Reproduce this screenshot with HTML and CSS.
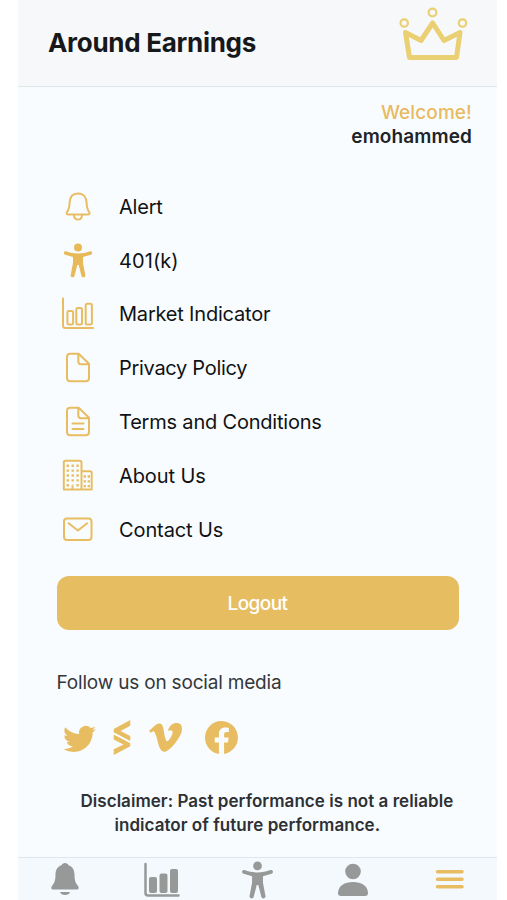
FILE: index.html
```html
<!DOCTYPE html>
<html lang="en">
<head>
<meta charset="utf-8">
<title>Around Earnings</title>
<link rel="stylesheet" href="styles.css">
</head>
<body>
<div class="screen">
  <header class="header">
    <h1 class="title">Around Earnings</h1>
    <svg class="crown" width="70" height="58" viewBox="0 0 70 58">
      <path d="M6.500 26.500 22 34.500 33.700 17 45 34.500 61 26.500 57.500 51.500H10.500z"/>
      <g class="jewels"><circle cx="5.200" cy="17" r="3.700"/><circle cx="33.500" cy="6.500" r="3.900"/><circle cx="63.500" cy="17" r="3.700"/></g>
    </svg>
  </header>
  <section class="welcome">
    <span class="hello">Welcome!</span>
    <span class="user">emohammed</span>
  </section>
  <nav class="menu">
    <a class="item"><svg class="icon" viewBox="0 0 36 36"><path d="M18 4.500c-5.500 0-8.200 4-8.400 9.300-.2 5.200-.8 7-2.500 9-.9 1.200-.7 2.700 1 2.700h20c1.700 0 1.900-1.500 1-2.700-1.700-2-2.300-3.800-2.500-9C26.400 8.500 23.500 4.500 18 4.500zM14 26.500c.4 5.400 7.600 5.400 8 0"/></svg><span>Alert</span></a>
    <a class="item"><svg class="icon solid" viewBox="0 0 36 36"><use href="#person"/></svg><span class="k401">401(k)</span></a>
    <a class="item"><svg class="icon" viewBox="0 0 36 36"><path d="M3 2.500v27q0 2.500 2.500 2.500H33"/><rect x="7.400" y="15" width="5.700" height="13.500" rx="1.500"/><rect x="16.300" y="12" width="5.700" height="16.500" rx="1.500"/><rect x="25.700" y="7.800" width="6.200" height="20.700" rx="1.500"/></svg><span>Market Indicator</span></a>
    <a class="item"><svg class="icon" viewBox="0 0 36 36"><use href="#doc"/></svg><span class="privacy">Privacy Policy</span></a>
    <a class="item"><svg class="icon" viewBox="0 0 36 36"><use href="#doc"/><path d="M12.500 19.500h11M12.500 25h11"/></svg><span>Terms and Conditions</span></a>
    <a class="item"><svg class="icon" viewBox="0 0 36 36"><path d="M3.800 31.500V4.500Q3.800 2.700 5.600 2.700H19.700Q21.500 2.700 21.500 4.500V31.500zM21.500 13.300h8.700q1.500 0 1.500 1.500v16.700H21.500M12.500 31.500v-3.200"/><path class="windows" d="M7.800 6.500v22M12.700 6.500v20M17.600 6.500v22"/><path class="windows" d="M24.800 17.300v12M28.800 17.300v12"/></svg><span class="short">About Us</span></a>
    <a class="item"><svg class="icon" viewBox="0 0 36 36"><rect x="4" y="6.500" width="27.500" height="21.500" rx="3"/><path d="m8.600 11.300 9.300 7.200 9.300-7.200"/></svg><span class="short">Contact Us</span></a>
  </nav>
  <button class="logout">Logout</button>
  <p class="follow">Follow us on social media</p>
  <div class="social">
    <svg class="twitter" viewBox="0 1 16 14" preserveAspectRatio="none"><path d="M5.026 15c6.038 0 9.341-5.003 9.341-9.334 0-.14 0-.282-.006-.422A6.685 6.685 0 0 0 16 3.542a6.658 6.658 0 0 1-1.889.518 3.301 3.301 0 0 0 1.447-1.817 6.533 6.533 0 0 1-2.087.793A3.286 3.286 0 0 0 7.875 6.030a9.325 9.325 0 0 1-6.767-3.429 3.289 3.289 0 0 0 1.018 4.382A3.323 3.323 0 0 1 .64 6.575v.045a3.288 3.288 0 0 0 2.632 3.218 3.203 3.203 0 0 1-.865.115 3.230 3.230 0 0 1-.614-.057 3.283 3.283 0 0 0 3.067 2.277A6.588 6.588 0 0 1 .78 13.580a6.320 6.320 0 0 1-.780-.045A9.344 9.344 0 0 0 5.026 15z"/></svg>
    <svg class="stock" viewBox="0 0 18 36"><path d="M17.500 0V6L7.500 11.200 17.500 16.500V21.500L.5 12.600V9.200zM.5 15 17.500 23.800V27L.5 36V30L10.500 25.200.5 20z"/></svg>
    <svg class="vimeo" viewBox="0 1 16 14" preserveAspectRatio="none"><path d="M15.992 4.204c-.071 1.556-1.158 3.687-3.262 6.393-2.175 2.829-4.016 4.243-5.522 4.243-.933 0-1.722-.861-2.367-2.583L3.550 7.523C3.070 5.800 2.556 4.940 2.007 4.940c-.118 0-.537.253-1.254.754L0 4.724c.8-.7 1.600-1.400 2.334-2.081 1.054-.910 1.845-1.388 2.373-1.437 1.243-.123 2.010.728 2.298 2.553.310 1.968.526 3.190.646 3.666.360 1.631.756 2.446 1.186 2.445.334 0 .836-.530 1.508-1.587.671-1.058 1.030-1.863 1.077-2.415.096-.913-.263-1.370-1.077-1.370-.4 0-.8.090-1.185.261.789-2.573 2.291-3.825 4.508-3.756 1.644.050 2.419 1.117 2.324 3.200z"/></svg>
    <svg class="facebook" viewBox="0 0 16 16"><path d="M16 8.049c0-4.446-3.582-8.050-8-8.050C3.580 0-.002 3.603-.002 8.050c0 4.017 2.926 7.347 6.750 7.951v-5.625h-2.030V8.050H6.750V6.275c0-2.017 1.195-3.131 3.022-3.131.876 0 1.791.157 1.791.157v1.980h-1.009c-.993 0-1.303.621-1.303 1.258v1.510h2.218l-.354 2.326H9.250V16c3.824-.604 6.750-3.934 6.750-7.951z"/></svg>
  </div>
  <p class="disclaimer"><span>Disclaimer: Past performance is not a reliable</span><span class="line2">indicator of future performance.</span></p>
  <footer class="tabs">
    <svg class="tab" viewBox="0 0 40 40"><path d="M19 4c-1.900 0-3 1-3.400 2.200-4 1.400-6 4.500-6.100 9.300-.1 6-.9 8-3 10.700C4.600 28.600 5 30.500 7.500 30.500h23c2.500 0 2.900-1.900 1-4.300-2.100-2.700-2.900-4.700-3-10.700-.1-4.800-2.100-7.900-6.100-9.300C22 5 20.900 4 19 4zM14 33h10c-.7 4-9.300 4-10 0z"/></svg>
    <svg class="tab" viewBox="0 0 40 40"><path class="axis" d="M3.500 5v29q0 2.500 2.500 2.500h30.500"/><rect x="7" y="18" width="8" height="16" rx="2"/><rect x="17.500" y="14.500" width="8" height="19.500" rx="2"/><rect x="28" y="10" width="8" height="24" rx="2"/></svg>
    <svg class="tab" viewBox="0 0 40 40"><use href="#person" transform="translate(.9 2) scale(1.090)"/></svg>
    <svg class="tab" viewBox="0 0 40 40"><circle cx="20" cy="12.500" r="7.800"/><path d="M5 33.500C5.500 27 11.500 23 20 23s14.500 4 15 10.500q.2 3.500-3 3.500H8q-3.200 0-3-3.500z"/></svg>
    <svg class="tab burger" viewBox="0 0 40 40"><path d="M8.500 12.700h24.500M8.500 20.200h24.500M8.500 27.700h24.500"/></svg>
  </footer>
</div>
<svg class="defs" width="0" height="0">
  <defs>
    <g id="person"><circle cx="18" cy="4.500" r="4"/><path d="M6 8.300C14 11.200 22 11.200 30 8.300c2.400-.6 3 2.800.8 3.500L23 14v6l2.300 12c.4 2.700-3.200 3.200-3.800.9L18.700 22h-1.400l-2.800 10.900c-.6 2.300-4.200 1.800-3.800-.9L13 20v-6l-7.800-2.200C3 11.100 3.600 7.700 6 8.300z"/></g>
    <g id="doc"><path d="M10 3.700h8.700L29 13.800v14.200q0 3.200-3.200 3.200H10.200Q7 31.200 7 28V6.900q0-3.200 3.200-3.200M18.300 4v7.600q0 2.600 2.600 2.600H29"/></g>
  </defs>
</svg>
</body>
</html>
```
FILE: styles.css
```css
* { box-sizing: border-box; }
body { margin: 0; background: #fff; font-family: Inter, "Liberation Sans", sans-serif; }
h1, p { margin: 0; }
.screen { width: 479px; height: 900px; margin-left: 18px; display: flex; flex-direction: column; background: #f8fcff; overflow: hidden; }
.header { height: 87px; flex: none; display: flex; justify-content: space-between; align-items: flex-start; padding: 0 28px 0 30px; background: #f6f8fa; border-bottom: 1px solid #dfe7eb; }
.title { margin-top: 26px; font-size: 26px; line-height: 33px; font-weight: 700; color: #17181a; white-space: nowrap; letter-spacing: -.29px; }
.crown { margin-top: 6px; fill: none; stroke: #ebcf73; stroke-width: 5; stroke-linejoin: round; }
.jewels { stroke-width: 2.200; }
.welcome { height: 93px; flex: none; padding: 14px 25px 0 0; display: flex; flex-direction: column; align-items: flex-end; font-size: 19px; line-height: 24px; font-weight: 600; color: #202327; letter-spacing: .1px; }
.hello { color: #e9ba60; font-weight: 500; letter-spacing: .1px; }
.menu { flex: none; display: flex; flex-direction: column; padding-left: 42px; }
.item { height: 53.800px; display: flex; align-items: center; gap: 23px; font-size: 20px; color: #101214; white-space: nowrap; letter-spacing: -.2px; }
.k401 { letter-spacing: .08px; }
.privacy { letter-spacing: -.3px; }
.short { letter-spacing: -.1px; }
.icon { width: 36px; height: 36px; flex: none; fill: none; stroke: #e8bd62; stroke-width: 2; stroke-linecap: round; stroke-linejoin: round; }
.icon.solid { fill: #e8b957; stroke: none; }
.icon .windows { stroke-width: 2.400; stroke-dasharray: 2.400 2.500; stroke-linecap: butt; }
.logout { flex: none; width: 402px; height: 54px; margin: 19px 0 0 38.500px; padding: 2px 0 0; border: 0; border-radius: 12px; background: #e7bd62; color: #fff; font: 500 19px/52px Inter, "Liberation Sans", sans-serif; letter-spacing: -.55px; }
.follow { margin: 41px 0 0 38.500px; font-size: 19px; line-height: 24px; color: #34373a; white-space: nowrap; letter-spacing: -.19px; }
.social { height: 36px; flex: none; margin: 25px 0 0 44.500px; display: flex; align-items: center; fill: #e8bd62; }
.twitter { width: 33px; height: 28px; }
.stock { width: 18px; height: 35px; margin-left: 17px; }
.vimeo { width: 33px; height: 29px; margin-left: 18px; }
.facebook { width: 33px; height: 33px; margin-left: 23px; }
.disclaimer { margin: 33px 0 0 62.500px; display: flex; flex-direction: column; font-size: 17px; line-height: 24px; font-weight: 600; color: #2e3134; white-space: nowrap; letter-spacing: .04px; }
.line2 { margin-left: 34px; }
.tabs { flex: none; height: 43px; margin-top: auto; border-top: 1px solid #dde7ed; display: grid; grid-template-columns: repeat(5, 1fr); justify-items: center; background: #f4f9fe; fill: #979999; }
.tab { width: 40px; height: 40px; margin-top: 1px; }
.axis { fill: none; stroke: #979999; stroke-width: 2.500; stroke-linecap: round; }
.burger { fill: none; stroke: #e8bd62; stroke-width: 3.500; stroke-linecap: round; }
.defs { position: absolute; }
```
